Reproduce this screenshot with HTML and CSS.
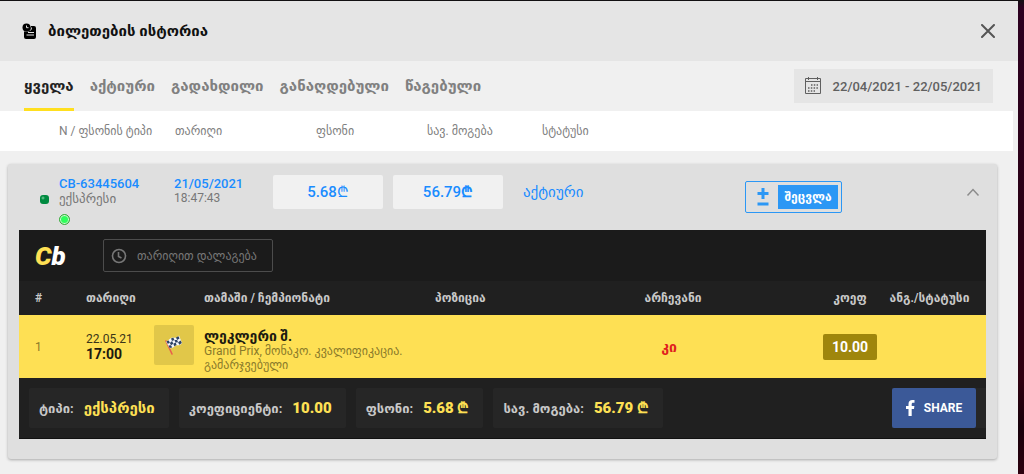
FILE: index.html
```html
<!DOCTYPE html>
<html lang="ka">
<head>
    <meta charset="UTF-8">
    <meta name="viewport" content="width=device-width, initial-scale=1.0">
    <title>ბილეთების ისტორია</title>
    <link rel="stylesheet" href="styles.css">
</head>
<body>

    <div class="modal">
        <header class="modal-header">
            <svg class="ticket-icon" width="15" height="17" viewBox="0 0 15 17">
                <path d="M9 3h3a2 2 0 0 1 2 2v9a2 2 0 0 1-2 2H4a2 2 0 0 1-2-2V8.500h5z" fill="#000"/>
                <circle cx="4.500" cy="4.500" r="4" fill="#000"/>
                <path d="M4.500 2.500v2.200h2" stroke="#e5e5e5" fill="none"/>
                <path d="M8.500 7.500a5 5 0 0 0 1-3M6 9.500h6M4.500 12h7.500" stroke="#e5e5e5" fill="none"/>
            </svg>
            <h1>ბილეთების ისტორია</h1>
            <button class="close-button" aria-label="დახურვა">
                <svg width="14" height="14" viewBox="0 0 14 14">
                    <path d="M1 1l12 12M13 1L1 13" stroke="#555" stroke-width="2" stroke-linecap="round"/>
                </svg>
            </button>
        </header>

        <div class="toolbar">
            <nav class="tabs">
                <a href="#" class="tab active">ყველა</a>
                <a href="#" class="tab">აქტიური</a>
                <a href="#" class="tab">გადახდილი</a>
                <a href="#" class="tab">განაღდებული</a>
                <a href="#" class="tab">წაგებული</a>
            </nav>
            <button class="date-range">
                <svg width="16" height="18" viewBox="0 0 16 18" fill="none" stroke="#606060">
                    <path d="M.5 1.500h15v15H.5zM.5 4.500h15M3.500 0v3M12.500 0v3"/>
                    <path d="M6 8h7M3 11h10M3 14h7" stroke-width="1.500" stroke-dasharray="1.500 1.300"/>
                </svg>
                <span>22/04/2021 - 22/05/2021</span>
            </button>
        </div>

        <div class="list-head">
            <span>N / ფსონის ტიპი</span>
            <span>თარიღი</span>
            <span>ფსონი</span>
            <span>სავ. მოგება</span>
            <span>სტატუსი</span>
        </div>

        <section class="ticket">
            <div class="ticket-head">
                <span class="ticket-mark"></span>
                <div class="ticket-id">
                    <strong>CB-63445604</strong>
                    <span>ექსპრესი</span>
                    <i class="online-dot"></i>
                </div>
                <div class="ticket-date">
                    <strong>21/05/2021</strong>
                    <span>18:47:43</span>
                </div>
                <div class="amount">5.68<span class="light">₾</span></div>
                <div class="amount">56.79<b>₾</b></div>
                <div class="ticket-status">აქტიური</div>
                <button class="edit-button">
                    <svg width="12" height="18" viewBox="0 0 12 18">
                        <path d="M6 0v11M.5 5.500h11M.5 16h11" stroke="#2b97f5" stroke-width="3"/>
                    </svg>
                    <span>შეცვლა</span>
                </button>
                <button class="collapse-button" aria-label="აკეცვა">
                    <svg width="14" height="9" viewBox="0 0 14 9">
                        <path d="M1.500 7.500L7 1.500l5.500 6" fill="none" stroke="#8c8c8c" stroke-width="1.500"/>
                    </svg>
                </button>
            </div>

            <div class="details">
                <div class="details-bar">
                    <div class="logo"><span>C</span>b</div>
                    <button class="sort-button">
                        <svg width="16" height="16" viewBox="0 0 16 16" fill="none" stroke="#777" stroke-width="1.600">
                            <circle cx="8" cy="8" r="6.500"/>
                            <path d="M7.500 4v4.500l3 1.500"/>
                        </svg>
                        <span>თარიღით დალაგება</span>
                    </button>
                </div>

                <table class="bets">
                    <thead>
                        <tr>
                            <th class="col-num">#</th>
                            <th class="col-date">თარიღი</th>
                            <th class="col-icon"></th>
                            <th class="col-game">თამაში / ჩემპიონატი</th>
                            <th class="col-position">პოზიცია</th>
                            <th class="col-choice">არჩევანი</th>
                            <th class="col-odds">კოეფ</th>
                            <th class="col-status">ანგ./სტატუსი</th>
                        </tr>
                    </thead>
                    <tbody>
                        <tr>
                            <td class="col-num">1</td>
                            <td class="col-date">22.05.21<b>17:00</b></td>
                            <td class="col-icon">
                                <div class="sport">
                                    <svg width="18" height="20" viewBox="0 0 18 20">
                                        <path d="M1 6l6 13" stroke="#e8604c" stroke-width="1.600" stroke-linecap="round"/>
                                        <path d="M1 6.500C4 6 5 2 8.500 2.500S12 3 14 .5L17 8c-2 3-4 2-6 2.500S8 14 4.500 13z" fill="#f4f6fa"/>
                                        <path d="M1.500 6.300l2.300-.8 1.100 2.500-2.300.8zM6 3.500l2.300-1 1.100 2.500-2.400.9zM11 2.500l2.500-1.300 1 2.400-2.400 1.300zM4.900 8l2.200-1.900 1.200 2.600-2.300 1.500zM9.400 5l2.600-.3 1.100 2.600-2.500.3zM3.500 10.500L6 10.200 7.200 12.500 4.600 13zM8.300 8.700l2.300-1.100 1 2.400-2.300 1.200zM13.100 7.300l2.600-1.700 1.100 2.400-2.500 1.700z" fill="#2d4263"/>
                                    </svg>
                                </div>
                            </td>
                            <td class="col-game"><b>ლეკლერი შ.</b>Grand Prix, მონაკო. კვალიფიკაცია.<br>გამარჯვებული</td>
                            <td class="col-position"></td>
                            <td class="col-choice">კი</td>
                            <td class="col-odds"><span class="odds">10.00</span></td>
                            <td class="col-status"></td>
                        </tr>
                    </tbody>
                </table>

                <div class="summary">
                    <div class="summary-item">ტიპი:<b>ექსპრესი</b></div>
                    <div class="summary-item">კოეფიციენტი:<b>10.00</b></div>
                    <div class="summary-item">ფსონი:<b>5.68 ₾</b></div>
                    <div class="summary-item">სავ. მოგება:<b>56.79 ₾</b></div>
                    <div class="share">
                        <button class="share-button">
                            <svg width="9" height="16" viewBox="0 0 9 16">
                                <path d="M2.500 16V9H0V6h2.500V4C2.500 1.400 4 0 6.300 0 7.400 0 8.500.1 8.500.1v2.600H7.200C6 2.700 5.700 3.400 5.700 4.200V6h2.700L8 9H5.700v7z" fill="#fff"/>
                            </svg>
                            <span>SHARE</span>
                        </button>
                    </div>
                </div>
            </div>
        </section>
    </div>

</body>
</html>
```
FILE: styles.css
```css
* {
    box-sizing: border-box;
}

body {
    margin: 0;
    background: linear-gradient(#120f12 0, #2c0020 8px, #2a0014 50%, #300010 80%, #16000a 90%, #2c000e 100%);
    font-family: Roboto, "DejaVu Sans", sans-serif;
    font-size: 12px;
    color: #777;
}

button {
    font-family: inherit;
    cursor: pointer;
    border: none;
    background: none;
    padding: 0;
}

svg {
    display: block;
    flex: none;
}

.modal {
    margin-right: 6px;
    min-height: 100vh;
    padding-bottom: 14px;
    border-top: 1px solid #121012;
    background-color: #f0f0f0;
}

.modal-header {
    display: flex;
    align-items: center;
    gap: 11px;
    height: 60px;
    padding: 0 23px 0 22px;
    background-color: #e5e5e5;
}

.modal-header h1 {
    margin: 0;
    font-size: 15px;
    color: #111;
}

.close-button {
    margin-left: auto;
}

.toolbar {
    display: flex;
    justify-content: space-between;
    height: 50px;
    padding: 0 25px 0 24px;
}

.tabs {
    display: flex;
    gap: 16px;
}

.tab {
    line-height: 50px;
    font-size: 15px;
    font-weight: bold;
    color: #808080;
    text-decoration: none;
    white-space: nowrap;
}

.tab.active {
    color: #222;
    box-shadow: inset 0 -3px #ffdf1f;
}

.date-range {
    display: flex;
    align-items: center;
    gap: 12px;
    height: 34px;
    margin-top: 8px;
    padding: 0 11px;
    background-color: #e5e5e5;
    font-size: 13px;
    font-weight: 500;
    color: #606060;
}

.list-head {
    display: grid;
    grid-template-columns: 116px 141px 111px 115px 1fr;
    align-items: center;
    height: 40px;
    margin-right: 5px;
    padding-left: 59px;
    background-color: #fff;
    font-size: 12px;
    color: #808080;
}

.ticket {
    margin: 13px 21px 0 8px;
    padding: 0 11px 20px;
    background-color: #dfdfdf;
    border-radius: 3px;
    box-shadow: 0 1px 3px rgba(0, 0, 0, 0.3);
}

.ticket-head {
    display: grid;
    grid-template-columns: 9px 105px 89px 110px 110px 222px 97px 1fr;
    column-gap: 10px;
    height: 66px;
    padding: 0 6px 0 21px;
}

.ticket-mark {
    height: 9px;
    margin-top: 31px;
    border-radius: 3px;
    background: radial-gradient(circle at 3px 3px, #7fd0a0 0, #008a40 2px);
}

.ticket-id,
.ticket-date {
    display: flex;
    flex-direction: column;
    padding-top: 12px;
    line-height: 15px;
}

.ticket-id strong,
.ticket-date strong {
    font-size: 13px;
    font-weight: 500;
    color: #1a8cff;
}

.ticket-id span {
    font-size: 13px;
}

.online-dot {
    width: 11px;
    height: 11px;
    margin-top: 8px;
    border: 1px solid #3fa63f;
    border-radius: 50%;
    background-color: #2eff5b;
    box-shadow: inset 0 0 0 1px #d5f5d5;
}

.amount {
    height: 34px;
    margin-top: 11px;
    border-radius: 2px;
    background-color: #f1f1f1;
    line-height: 34px;
    text-align: center;
    font-size: 15px;
    font-weight: 500;
    color: #1a8cff;
}

.amount .light {
    font-weight: normal;
}

.ticket-status {
    padding: 20px 0 0 10px;
    line-height: 16px;
    font-size: 15px;
    color: #1a8cff;
}

.edit-button {
    display: flex;
    align-items: center;
    justify-content: space-between;
    height: 32px;
    margin-top: 17px;
    padding: 0 3px 0 11px;
    border: 1px solid #2b97f5;
    border-radius: 2px;
}

.edit-button span {
    width: 60px;
    background-color: #2b97f5;
    line-height: 24px;
    font-size: 12px;
    font-weight: bold;
    color: #fff;
}

.collapse-button {
    align-self: start;
    justify-self: end;
    margin-top: 24px;
}

.details {
    border-bottom: 1px solid #111;
    background-color: #202020;
}

.details-bar {
    display: flex;
    align-items: center;
    gap: 36px;
    height: 51px;
    padding-left: 16px;
    background-color: #1b1b1b;
}

.logo {
    width: 32px;
    font-size: 26px;
    line-height: 28px;
    font-weight: 900;
    font-style: italic;
    color: #fff;
}

.logo span {
    color: #fee054;
}

.sort-button {
    display: flex;
    align-items: center;
    gap: 10px;
    width: 170px;
    height: 33px;
    padding-left: 7px;
    border: 1px solid #4c4c4c;
    border-radius: 2px;
    font-size: 12px;
    color: #777;
    white-space: nowrap;
}

.bets {
    width: 100%;
    table-layout: fixed;
    border-collapse: collapse;
}

.bets th,
.bets td {
    padding: 0 0 0 10px;
    text-align: left;
    white-space: nowrap;
}

.bets th {
    height: 34px;
    font-size: 12px;
    color: #c8c8c8;
}

.bets td {
    height: 63px;
    background-color: #fee054;
    line-height: 14px;
    color: #8a7a2a;
}

.bets b {
    display: block;
    font-size: 14px;
    line-height: 16px;
    color: #1c1a10;
}

.bets .col-num {
    width: 57px;
    padding-left: 16px;
}

.bets .col-date {
    width: 68px;
}

.bets td.col-date {
    color: #3a3518;
}

.bets .col-icon {
    width: 50px;
}

.bets td.col-icon {
    padding-bottom: 4px;
}

.bets .col-game {
    width: 231px;
}

.bets td.col-game {
    padding-top: 6px;
}

.bets .col-position {
    width: 106px;
}

.bets .col-choice {
    padding: 0;
    text-align: center;
}

.bets td.col-choice {
    padding-right: 8px;
    font-size: 14px;
    font-weight: bold;
    color: #e01f1f;
}

.bets .col-odds {
    width: 70px;
    padding: 0;
    text-align: center;
}

.bets .col-status {
    width: 101px;
    padding: 0 12px 0 0;
    text-align: center;
}

.sport {
    display: flex;
    align-items: center;
    justify-content: center;
    width: 40px;
    height: 40px;
    border-radius: 2px;
    background-color: #e1c749;
}

.odds {
    display: inline-block;
    width: 54px;
    border-radius: 2px;
    background-color: #9f860c;
    line-height: 26px;
    font-size: 14px;
    font-weight: bold;
    color: #fff;
}

.summary {
    display: flex;
    gap: 10px;
    height: 60px;
    padding: 10px 0 10px 10px;
    line-height: 40px;
    font-size: 13px;
    font-weight: bold;
    color: #c8c8c8;
    white-space: nowrap;
}

.summary-item {
    padding: 0 14px 0 10px;
    border-radius: 2px;
    background-color: #262626;
}

.summary-item b {
    margin-left: 10px;
    font-size: 15px;
    color: #fee054;
}

.share {
    margin-left: auto;
    padding-right: 10px;
    background-color: #262626;
}

.share-button {
    display: flex;
    align-items: center;
    justify-content: center;
    gap: 9px;
    width: 84px;
    height: 40px;
    border-radius: 2px;
    background-color: #3b5998;
    font-size: 12px;
    font-weight: bold;
    color: #fff;
}
```
